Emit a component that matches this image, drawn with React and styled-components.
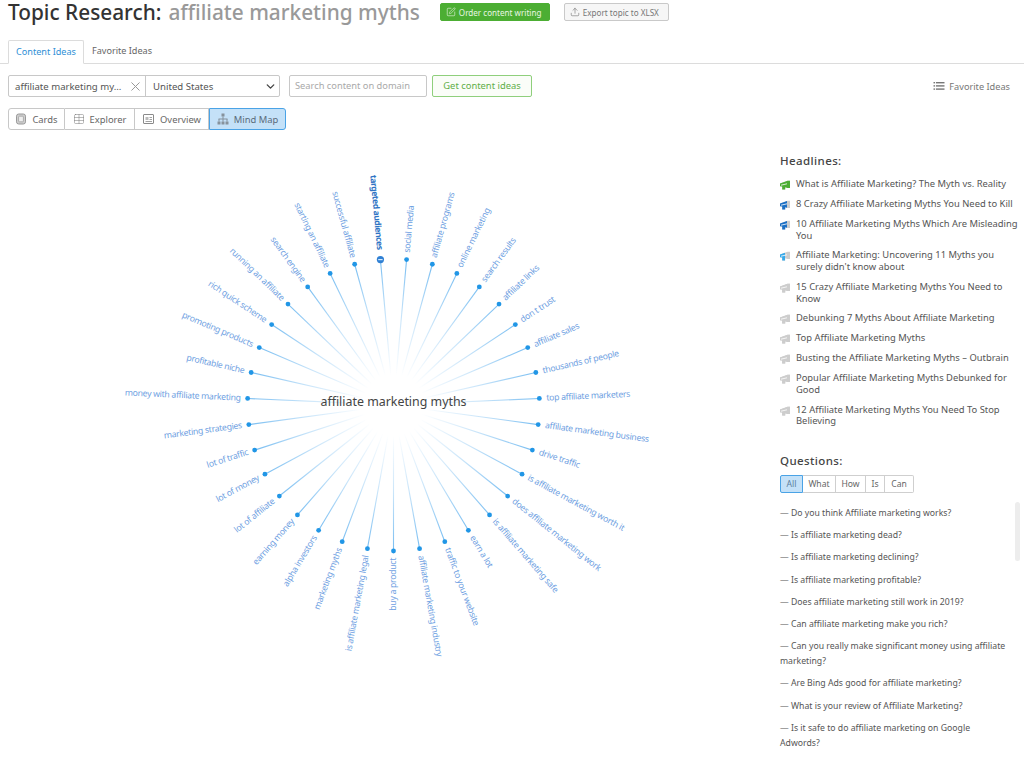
import React from "react";
import styled, { createGlobalStyle } from "styled-components";
import { SquarePen, Upload, X, ChevronDown, Table } from "lucide-react";

const Global = createGlobalStyle`
  html, body { margin: 0; padding: 0; background: #fff; }
  body { font-family: "Noto Sans", "Open Sans", sans-serif; color: #555; }
`;

const Page = styled.div`
  width: 1024px;
  height: 759px;
  overflow: hidden;
  position: relative;
  background: #fff;
`;
const Header = styled.header`
  display: flex;
  align-items: center;
  height: 24px;
  padding: 0 0 0 8px;
`;
const Title = styled.h1`
  flex: none;
  margin: 0 20px 0 0;
  font-size: 20.8px;
  line-height: 28px;
  font-weight: 500;
  color: #333;
  white-space: nowrap;
`;
const Keyword = styled.span`
  color: #999;
  margin-left: 7px;
`;
const HeadButton = styled.button`
  display: flex;
  flex: none;
  align-items: center;
  gap: 3px;
  height: 18px;
  box-sizing: border-box;
  padding: 0 0 0 5px;
  width: ${(p) => p.$w}px;
  margin-right: ${(p) => p.$mr || 0}px;
  font: 8.1px "Noto Sans", sans-serif;
  border-radius: 2px;
  white-space: nowrap;
  background: ${(p) => (p.$green ? "#4cae33" : "#f6f6f6")};
  color: ${(p) => (p.$green ? "#e8f6e2" : "#777")};
  border: 1px solid ${(p) => (p.$green ? "#4cae33" : "#c9c9c9")};
`;
const Tabs = styled.nav`
  display: flex;
  height: 23px;
  margin-top: 16px;
  padding-left: 8px;
  border-bottom: 1px solid #dcdcdc;
`;
const Tab = styled.div`
  box-sizing: border-box;
  height: 24px;
  width: ${(p) => p.$w}px;
  font-size: 9.1px;
  line-height: 21px;
  text-align: center;
  color: ${(p) => (p.$active ? "#2e8fd6" : "#666")};
  ${(p) =>
    p.$active
      ? "background: #fff; border: 1px solid #dcdcdc; border-bottom-color: #fff; border-radius: 2px 2px 0 0;"
      : ""}
`;
const Controls = styled.div`
  display: flex;
  align-items: center;
  height: 22px;
  margin-top: 11px;
  padding: 0 14px 0 8px;
`;
const Combo = styled.div`
  display: flex;
  width: 272px;
  height: 22px;
  box-sizing: border-box;
  border: 1px solid #c8c8c8;
  border-radius: 2px;
`;
const ComboCell = styled.div`
  display: flex;
  align-items: center;
  justify-content: space-between;
  box-sizing: border-box;
  width: ${(p) => p.$w}px;
  padding: 0 2px 0 ${(p) => (p.$sep ? 7 : 6)}px;
  font-size: 9.6px;
  color: #555;
  white-space: nowrap;
  border-left: ${(p) => (p.$sep ? "1px solid #c8c8c8" : "none")};
`;
const SearchBox = styled.div`
  box-sizing: border-box;
  width: 138px;
  height: 22px;
  margin-left: 9px;
  padding-left: 5px;
  border: 1px solid #c8c8c8;
  border-radius: 2px;
  font-size: 9.3px;
  line-height: 20px;
  color: #a9a9a9;
  white-space: nowrap;
`;
const GetButton = styled.div`
  box-sizing: border-box;
  width: 100px;
  height: 22px;
  margin-left: 5px;
  border: 1px solid #8fcf7c;
  border-radius: 2px;
  background: #fafdf8;
  font-size: 9.4px;
  line-height: 20px;
  text-align: center;
  color: #5fae48;
`;
const FavLink = styled.div`
  margin-left: auto;
  display: flex;
  align-items: center;
  gap: 4px;
  font-size: 9.2px;
  color: #777;
`;
const Views = styled.div`
  display: flex;
  height: 22px;
  margin: 11px 0 0 8px;
`;
const View = styled.div`
  display: flex;
  align-items: center;
  justify-content: center;
  gap: 5px;
  box-sizing: border-box;
  width: ${(p) => p.$w}px;
  height: 22px;
  font-size: 9.4px;
  white-space: nowrap;
  color: ${(p) => (p.$active ? "#5a6b7a" : "#666")};
  background: ${(p) => (p.$active ? "#c4e1f8" : "#fff")};
  border: 1px solid ${(p) => (p.$active ? "#4aa3e6" : "#c8c8c8")};
  border-left-width: ${(p) => (p.$first || p.$active ? 1 : 0)}px;
  border-radius: ${(p) => (p.$first ? "3px 0 0 3px" : p.$active ? "0 3px 3px 0" : "0")};
`;
const Main = styled.main`
  display: flex;
  height: 629px;
`;
const Canvas = styled.svg`
  display: block;
  flex: none;
  width: 780px;
  height: 629px;
`;
const Ray = styled.line`
  stroke-width: 1.1;
`;
const Dot = styled.circle`
  fill: #2196e6;
`;
const Label = styled.text`
  font-family: "Noto Sans", sans-serif;
  font-size: ${(p) => (p.$strong ? 8.6 : 8.7)}px;
  letter-spacing: ${(p) => (p.$strong ? -0.45 : -0.3)}px;
  fill: ${(p) => (p.$strong ? "#2f74c4" : "#6f9fe2")};
  font-weight: ${(p) => (p.$strong ? 700 : 400)};
`;
const Centre = styled.text`
  font-family: "Noto Sans", sans-serif;
  font-size: 12.4px;
  fill: #444;
`;
const Sidebar = styled.aside`
  flex: 1;
  padding-top: 24px;
  min-width: 0;
`;
const Heading = styled.h3`
  margin: 0;
  font-size: 11.5px;
  line-height: 14px;
  font-weight: 500;
  letter-spacing: 0.4px;
  color: #444;
`;
const HeadlineList = styled.ul`
  list-style: none;
  margin: 10px 0 0;
  padding: 0;
  display: flex;
  flex-direction: column;
  gap: 8px;
`;
const Headline = styled.li`
  display: flex;
  gap: 6px;
  font-size: 9.4px;
  line-height: 11.7px;
  color: #555;
  width: 240px;
`;
const Mega = styled.svg`
  flex: none;
  width: 10px;
  height: 10px;
  margin-top: 2px;
`;
const QuestionsBlock = styled.section`
  margin-top: 27px;
`;
const Filter = styled.div`
  display: flex;
  height: 18px;
  margin-top: 7px;
  width: max-content;
`;
const FilterBtn = styled.div`
  box-sizing: border-box;
  width: ${(p) => p.$w}px;
  height: 18px;
  font-size: 8.6px;
  line-height: 16px;
  text-align: center;
  color: ${(p) => (p.$active ? "#5d7f9c" : "#666")};
  background: ${(p) => (p.$active ? "#c4e1f8" : "#fff")};
  border: 1px solid ${(p) => (p.$active ? "#4aa3e6" : "#cfcfcf")};
  border-left-width: ${(p) => (p.$first || p.$active ? 1 : 0)}px;
  border-radius: ${(p) => (p.$first ? "2px 0 0 2px" : p.$last ? "0 2px 2px 0" : "0")};
`;
const QuestionList = styled.ul`
  list-style: none;
  margin: 13px 0 0;
  padding: 0;
  display: flex;
  flex-direction: column;
  gap: 7.2px;
`;
const Question = styled.li`
  font-size: 8.7px;
  line-height: 15px;
  color: #555;
  width: 226px;
`;
const Thumb = styled.div`
  position: absolute;
  left: 1015px;
  top: 502px;
  width: 5px;
  height: 59px;
  border-radius: 3px;
  background: #ededed;
`;

const CX = 393.5;
const CY = 275; // 405 on the page, the canvas starts at y=130
const R = 146;
const WORDS = [
  "targeted audiences", "social media", "affiliate programs", "online marketing",
  "search results", "affiliate links", "don t trust", "affiliate sales",
  "thousands of people", "top affiliate marketers", "affiliate marketing business",
  "drive traffic", "is affiliate marketing worth it", "does affiliate marketing work",
  "is affiliate marketing safe", "earn a lot", "traffic to your website",
  "affiliate marketing industry", "buy a product", "is affiliate marketing legal",
  "marketing myths", "alpha investors", "earning money", "lot of affiliate",
  "lot of money", "lot of traffic", "marketing strategies", "money with affiliate marketing",
  "profitable niche", "promoting products", "rich quick scheme", "running an affiliate",
  "search engine", "starting an affiliate", "successful affiliate",
];

const nodes = WORDS.map((word, i) => {
  const deg = 90 + ((i - 18) * 360) / 35;
  const a = (deg * Math.PI) / 180;
  const c = Math.cos(a);
  const s = Math.sin(a);
  const strong = i === 0;
  const off = strong ? 10 : 7;
  const right = c > 0.001;
  return {
    word, i, strong, right,
    x: CX + R * c,
    y: CY + R * s,
    sx: CX + 30 * c,
    sy: CY + 30 * s,
    tx: CX + (R + off) * c,
    ty: CY + (R + off) * s,
    rot: right ? deg : deg + 180,
  };
});

const MindMap = () => (
  <Canvas viewBox="0 0 780 629">
    <defs>
      {nodes.map((n) => (
        <linearGradient key={n.i} id={`ray${n.i}`} gradientUnits="userSpaceOnUse" x1={n.sx} y1={n.sy} x2={n.x} y2={n.y}>
          <stop offset="0" stopColor="#78bdf1" stopOpacity="0" />
          <stop offset="0.5" stopColor="#78bdf1" stopOpacity="0.4" />
          <stop offset="1" stopColor="#78bdf1" stopOpacity="1" />
        </linearGradient>
      ))}
    </defs>
    {nodes.map((n) => (
      <Ray key={n.i} x1={n.sx} y1={n.sy} x2={n.x} y2={n.y} stroke={`url(#ray${n.i})`} />
    ))}
    {nodes.map((n) =>
      n.strong ? (
        <g key={n.i}>
          <circle cx={n.x} cy={n.y} r="3.6" fill="#2f80d4" />
          <rect x={n.x - 2.2} y={n.y - 0.6} width="4.4" height="1.2" fill="#d6e9fa" />
        </g>
      ) : (
        <Dot key={n.i} cx={n.x} cy={n.y} r="2.4" />
      )
    )}
    {nodes.map((n) => (
      <Label
        key={n.i}
        $strong={n.strong}
        x={n.tx}
        y={n.ty}
        dy="-0.5"
        textAnchor={n.right ? "start" : "end"}
        dominantBaseline="central"
        transform={`rotate(${n.rot} ${n.tx} ${n.ty})`}
      >
        {n.word}
      </Label>
    ))}
    <Centre x={CX} y={CY - 4} textAnchor="middle" dominantBaseline="central">
      affiliate marketing myths
    </Centre>
  </Canvas>
);

const MEGA = "M0 3.6 L7.6 0.8 H10 V8 H7.6 L5.2 7.2 V9.6 H2.2 V6.6 L0 6.2 Z";
const Megaphone = ({ color, fill }) => {
  const id = `m${color.slice(1)}`;
  return (
    <Mega viewBox="0 0 10 10">
      <defs>
        <clipPath id={id}>
          <rect x="0" y="0" width={fill} height="10" />
        </clipPath>
      </defs>
      <path d={MEGA} fill="#cdcdcd" />
      <path d={MEGA} fill={color} clipPath={`url(#${id})`} />
      <path d="M1 5.2 L7 3.8" stroke="#fff" strokeWidth="0.8" fill="none" />
    </Mega>
  );
};

const ListIcon = () => (
  <svg width="12" height="10" viewBox="0 0 12 10" fill="#777">
    <rect x="0.5" y="1" width="1.6" height="1.4" />
    <rect x="3" y="1" width="8.5" height="1.4" />
    <rect x="0.5" y="4.2" width="1.6" height="1.4" />
    <rect x="3" y="4.2" width="8.5" height="1.4" />
    <rect x="0.5" y="7.4" width="1.6" height="1.4" />
    <rect x="3" y="7.4" width="8.5" height="1.4" />
  </svg>
);
const CardsIcon = () => (
  <svg width="12" height="12" viewBox="0 0 12 12" fill="none" stroke="#999">
    <rect x="1.5" y="1" width="9" height="10" rx="2.2" fill="#cfcfcf" />
    <rect x="3.6" y="3.2" width="4.8" height="5.6" rx="0.6" fill="#eee" strokeWidth="0.7" />
  </svg>
);
const OverviewIcon = () => (
  <svg width="13" height="12" viewBox="0 0 13 12" fill="none" stroke="#8a8a8a">
    <rect x="1.5" y="1.5" width="10" height="9" rx="0.5" />
    <rect x="3.5" y="4" width="3" height="3" fill="#bbb" stroke="none" />
    <path d="M7.5 4.5h2.5M7.5 6.5h2.5M3.5 8.5h6.5" strokeWidth="0.8" />
  </svg>
);
const TreeIcon = () => (
  <svg width="12" height="12" viewBox="0 0 12 12" fill="#86929c">
    <rect x="4.5" y="0.5" width="3" height="3" />
    <rect x="5.5" y="3.5" width="1" height="2.5" />
    <rect x="1.5" y="5.5" width="9" height="1" />
    <rect x="1.5" y="6" width="1" height="2.5" />
    <rect x="5.5" y="6" width="1" height="2.5" />
    <rect x="9.5" y="6" width="1" height="2.5" />
    <rect x="0.5" y="8.5" width="3" height="3" />
    <rect x="4.5" y="8.5" width="3" height="3" />
    <rect x="8.5" y="8.5" width="3" height="3" />
  </svg>
);

const HEADLINES = [
  ["What is Affiliate Marketing? The Myth vs. Reality", "#4cae33", 10],
  ["8 Crazy Affiliate Marketing Myths You Need to Kill", "#1a6fc4", 7],
  ["10 Affiliate Marketing Myths Which Are Misleading You", "#1a6fc4", 7],
  ["Affiliate Marketing: Uncovering 11 Myths you surely didn't know about", "#35a9ea", 5],
  ["15 Crazy Affiliate Marketing Myths You Need to Know", "#cdcdcd", 10],
  ["Debunking 7 Myths About Affiliate Marketing", "#cdcdcd", 10],
  ["Top Affiliate Marketing Myths", "#cdcdcd", 10],
  ["Busting the Affiliate Marketing Myths – Outbrain", "#cdcdcd", 10],
  ["Popular Affiliate Marketing Myths Debunked for Good", "#cdcdcd", 10],
  ["12 Affiliate Marketing Myths You Need To Stop Believing", "#cdcdcd", 10],
];
const QUESTIONS = [
  "Do you think Affiliate marketing works?",
  "Is affiliate marketing dead?",
  "Is affiliate marketing declining?",
  "Is affiliate marketing profitable?",
  "Does affiliate marketing still work in 2019?",
  "Can affiliate marketing make you rich?",
  "Can you really make significant money using affiliate marketing?",
  "Are Bing Ads good for affiliate marketing?",
  "What is your review of Affiliate Marketing?",
  "Is it safe to do affiliate marketing on Google Adwords?",
];

export default function App() {
  return (
    <Page>
      <Global />
      <Header>
        <Title>
          Topic Research:<Keyword>affiliate marketing myths</Keyword>
        </Title>
        <HeadButton $green $w={110} $mr={14}>
          <SquarePen size={10} strokeWidth={1.5} />
          Order content writing
        </HeadButton>
        <HeadButton $w={105}>
          <Upload size={10} strokeWidth={1.5} />
          Export topic to XLSX
        </HeadButton>
      </Header>
      <Tabs>
        <Tab $active $w={76}>Content Ideas</Tab>
        <Tab $w={76}>Favorite Ideas</Tab>
      </Tabs>
      <Controls>
        <Combo>
          <ComboCell $w={136}>
            affiliate marketing my…
            <X size={15} color="#999" strokeWidth={1.6} />
          </ComboCell>
          <ComboCell $w={134} $sep>
            United States
            <ChevronDown size={13} color="#444" strokeWidth={2.5} />
          </ComboCell>
        </Combo>
        <SearchBox>Search content on domain</SearchBox>
        <GetButton>Get content ideas</GetButton>
        <FavLink>
          <ListIcon />
          Favorite Ideas
        </FavLink>
      </Controls>
      <Views>
        <View $first $w={57}><CardsIcon />Cards</View>
        <View $w={70}><Table size={12} strokeWidth={1} color="#777" />Explorer</View>
        <View $w={74}><OverviewIcon />Overview</View>
        <View $active $w={77}><TreeIcon />Mind Map</View>
      </Views>
      <Main>
        <MindMap />
        <Sidebar>
          <Heading>Headlines:</Heading>
          <HeadlineList>
            {HEADLINES.map(([text, color, fill]) => (
              <Headline key={text}>
                <Megaphone color={color} fill={fill} />
                <span>{text}</span>
              </Headline>
            ))}
          </HeadlineList>
          <QuestionsBlock>
            <Heading>Questions:</Heading>
            <Filter>
              <FilterBtn $first $active $w={23}>All</FilterBtn>
              <FilterBtn $w={33}>What</FilterBtn>
              <FilterBtn $w={30}>How</FilterBtn>
              <FilterBtn $w={19}>Is</FilterBtn>
              <FilterBtn $last $w={29}>Can</FilterBtn>
            </Filter>
            <QuestionList>
              {QUESTIONS.map((q) => (
                <Question key={q}>— {q}</Question>
              ))}
            </QuestionList>
          </QuestionsBlock>
        </Sidebar>
      </Main>
      <Thumb />
    </Page>
  );
}
